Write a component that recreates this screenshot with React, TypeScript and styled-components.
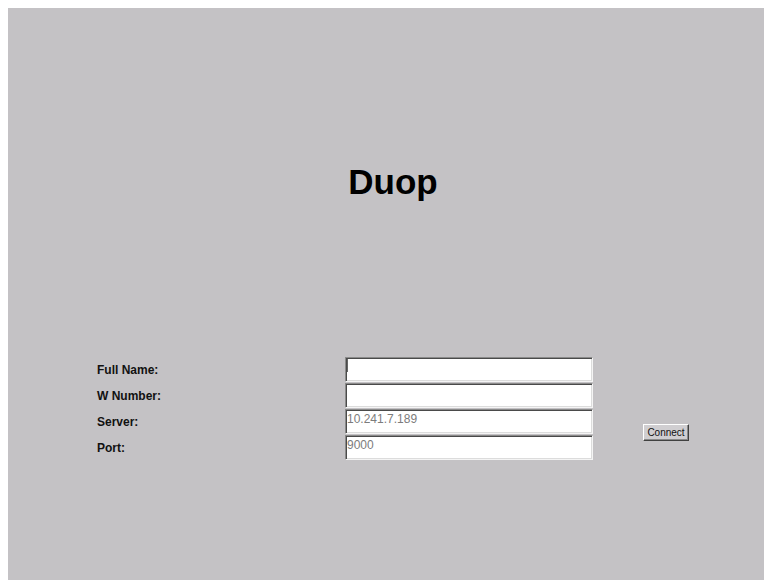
import { Fragment } from "react";
import styled, { createGlobalStyle } from "styled-components";

const GlobalStyle = createGlobalStyle`
  html, body {
    overflow: hidden;
  }
  body {
    margin: 8px 0 0 8px;
    font-family: "Liberation Sans", Arial, sans-serif;
  }
`;

const Panel = styled.div`
  height: 572px;
  background: #c4c2c5;
  display: flex;
  flex-direction: column;
  padding-top: 154px;
  box-sizing: border-box;
`;

const Title = styled.h1`
  margin: 0 0 0 14px;
  font-size: 35px;
  line-height: 40px;
  font-weight: bold;
  text-align: center;
  color: #000;
`;

const Form = styled.div`
  display: grid;
  grid-template-columns: 248px 248px 50px 46px;
  grid-template-rows: repeat(4, 25px);
  row-gap: 1px;
  margin: 155px 0 0 89px;
`;

const Label = styled.label<{ $row: number }>`
  grid-column: 1;
  grid-row: ${(p) => p.$row};
  align-self: center;
  font-size: 12px;
  font-weight: bold;
  color: #111;
`;

const Field = styled.div<{ $row: number }>`
  grid-column: 2;
  grid-row: ${(p) => p.$row};
  position: relative;
`;

const Input = styled.input`
  display: block;
  width: 100%;
  height: 25px;
  box-sizing: border-box;
  margin: 0;
  padding: 1px 1px 6px;
  font-family: "Liberation Sans", Arial, sans-serif;
  font-size: 12px;
  line-height: 14px;
  color: #7c7c7c;
  background: #fff;
  border: 1px solid;
  border-color: #8a8a8a #f4f4f4 #f4f4f4 #8a8a8a;
  box-shadow: inset 1px 1px #4a4a4a, inset -1px -1px #dcdcdc;
  outline: none;
`;

// static text cursor shown in the focused field
const Caret = styled.span`
  position: absolute;
  left: 2px;
  top: 2px;
  width: 1px;
  height: 13px;
  background: #666;
`;

const Button = styled.button`
  grid-column: 4;
  grid-row: 3;
  align-self: start;
  margin-top: 15px;
  width: 46px;
  height: 17px;
  padding: 0;
  font-family: "Liberation Sans", Arial, sans-serif;
  font-size: 10px;
  color: #111;
  background: #d0ced1;
  border: 1px solid;
  border-color: #fff #404040 #404040 #fff;
  box-shadow: inset -1px -1px #8a8a8a;
  cursor: default;
`;

const fields = [
  { label: "Full Name:", value: "", caret: true },
  { label: "W Number:", value: "" },
  { label: "Server:", value: "10.241.7.189" },
  { label: "Port:", value: "9000" },
];

export default function App() {
  return (
    <>
      <GlobalStyle />
      <Panel>
        <Title>Duop</Title>
        <Form>
          {fields.map((f, i) => (
            <Fragment key={f.label}>
              <Label $row={i + 1}>{f.label}</Label>
              <Field $row={i + 1}>
                <Input defaultValue={f.value} readOnly />
                {f.caret && <Caret />}
              </Field>
            </Fragment>
          ))}
          <Button>Connect</Button>
        </Form>
      </Panel>
    </>
  );
}
